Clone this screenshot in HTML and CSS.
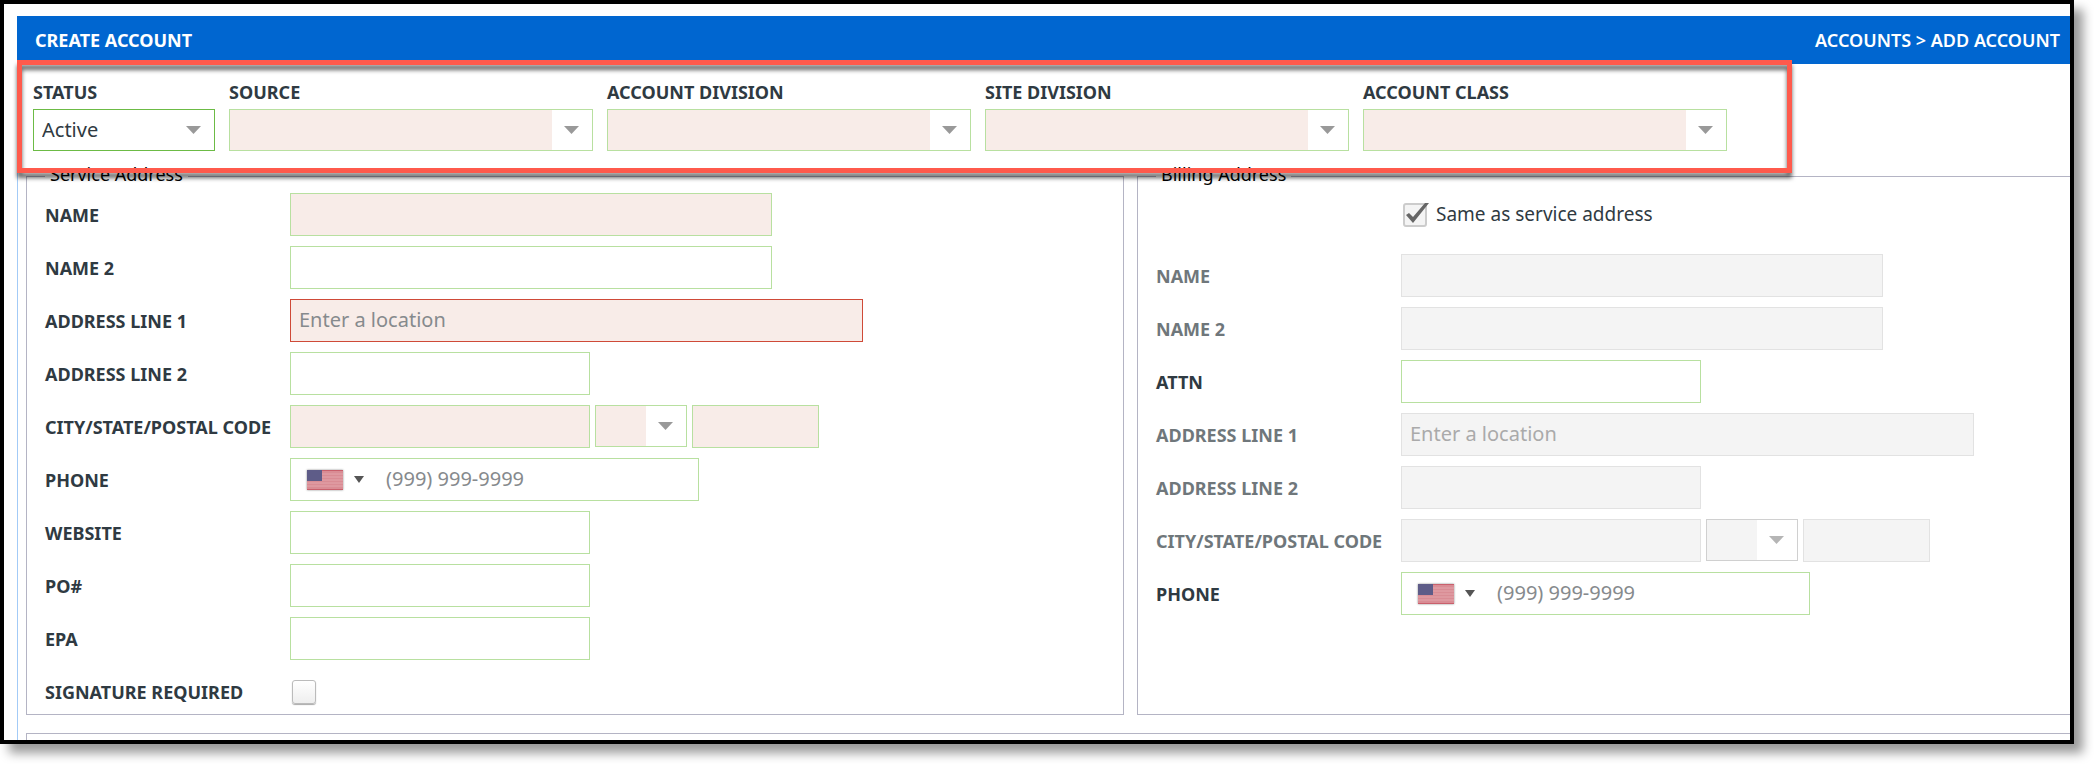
FILE: index.html
```html
<!DOCTYPE html>
<html lang="en">
<head>
  <meta charset="UTF-8" />
  <meta name="viewport" content="width=device-width, initial-scale=1.0"/>
  <title>Create Account</title>
  <link rel="stylesheet" href="styles.css">
</head>
<body>

  <div class="frame">
    <form class="page">

      <header class="page-header">
        <h1>CREATE ACCOUNT</h1>
        <nav><a href="#">ACCOUNTS</a> &gt; <a href="#">ADD ACCOUNT</a></nav>
      </header>

      <!-- Account filters -->
      <div class="filters">
        <div class="filter filter-status">
          <label for="status">STATUS</label>
          <select id="status" class="active"><option>Active</option></select>
        </div>
        <div class="filter">
          <label for="source">SOURCE</label>
          <select id="source" class="required"><option></option></select>
        </div>
        <div class="filter">
          <label for="accountDivision">ACCOUNT DIVISION</label>
          <select id="accountDivision" class="required"><option></option></select>
        </div>
        <div class="filter">
          <label for="siteDivision">SITE DIVISION</label>
          <select id="siteDivision" class="required"><option></option></select>
        </div>
        <div class="filter">
          <label for="accountClass">ACCOUNT CLASS</label>
          <select id="accountClass" class="required"><option></option></select>
        </div>
        <div class="highlight"></div>
      </div>

      <div class="addresses">
        <fieldset>
          <legend>Service Address</legend>
          <div class="rows">
            <div class="row">
              <label for="name">NAME</label>
              <input id="name" type="text" class="wide required">
            </div>
            <div class="row">
              <label for="name2">NAME 2</label>
              <input id="name2" type="text" class="wide">
            </div>
            <div class="row">
              <label for="address1">ADDRESS LINE 1</label>
              <input id="address1" type="text" class="full required invalid" placeholder="Enter a location">
            </div>
            <div class="row">
              <label for="address2">ADDRESS LINE 2</label>
              <input id="address2" type="text">
            </div>
            <div class="row">
              <label for="city">CITY/STATE/POSTAL CODE</label>
              <input id="city" type="text" class="required">
              <select class="state required" aria-label="State"><option></option></select>
              <input type="text" class="postal required" aria-label="Postal code">
            </div>
            <div class="row">
              <label for="phone">PHONE</label>
              <div class="phone">
                <button type="button" class="country" aria-label="Country">
                  <svg class="flag" viewBox="0 0 36 20">
                    <rect width="36" height="20" fill="#d98c94"/>
                    <path d="M0 .5h36M0 19.500h36" stroke="#c9606c" stroke-width="1"/>
                    <path d="M0 4h36M0 7h36M0 10h36M0 13h36M0 16h36" stroke="#e3a5ab" stroke-width="1"/>
                    <rect width="15" height="11" fill="#5e5c88"/>
                  </svg>
                  <svg class="caret" viewBox="0 0 10 7"><path d="M0 0h10L5 7z" fill="#555"/></svg>
                </button>
                <input id="phone" type="tel" placeholder="(999) 999-9999">
              </div>
            </div>
            <div class="row">
              <label for="website">WEBSITE</label>
              <input id="website" type="text">
            </div>
            <div class="row">
              <label for="po">PO#</label>
              <input id="po" type="text">
            </div>
            <div class="row">
              <label for="epa">EPA</label>
              <input id="epa" type="text">
            </div>
            <div class="row">
              <label for="signature">SIGNATURE REQUIRED</label>
              <input id="signature" type="checkbox">
            </div>
          </div>
        </fieldset>

        <fieldset class="billing">
          <legend>Billing Address</legend>
          <div class="rows">
            <div class="row same-row">
              <input id="same" type="checkbox" checked>
              <label for="same">Same as service address</label>
            </div>
            <div class="row disabled">
              <label for="billName">NAME</label>
              <input id="billName" type="text" class="wide" disabled>
            </div>
            <div class="row disabled">
              <label for="billName2">NAME 2</label>
              <input id="billName2" type="text" class="wide" disabled>
            </div>
            <div class="row">
              <label for="attn">ATTN</label>
              <input id="attn" type="text">
            </div>
            <div class="row disabled">
              <label for="billAddress1">ADDRESS LINE 1</label>
              <input id="billAddress1" type="text" class="full" placeholder="Enter a location" disabled>
            </div>
            <div class="row disabled">
              <label for="billAddress2">ADDRESS LINE 2</label>
              <input id="billAddress2" type="text" disabled>
            </div>
            <div class="row disabled">
              <label for="billCity">CITY/STATE/POSTAL CODE</label>
              <input id="billCity" type="text" disabled>
              <select class="state" aria-label="Billing state" disabled><option></option></select>
              <input type="text" class="postal" aria-label="Billing postal code" disabled>
            </div>
            <div class="row">
              <label for="billPhone">PHONE</label>
              <div class="phone">
                <button type="button" class="country" aria-label="Billing country">
                  <svg class="flag" viewBox="0 0 36 20">
                    <rect width="36" height="20" fill="#d98c94"/>
                    <path d="M0 .5h36M0 19.500h36" stroke="#c9606c" stroke-width="1"/>
                    <path d="M0 4h36M0 7h36M0 10h36M0 13h36M0 16h36" stroke="#e3a5ab" stroke-width="1"/>
                    <rect width="15" height="11" fill="#5e5c88"/>
                  </svg>
                  <svg class="caret" viewBox="0 0 10 7"><path d="M0 0h10L5 7z" fill="#555"/></svg>
                </button>
                <input id="billPhone" type="tel" placeholder="(999) 999-9999">
              </div>
            </div>
          </div>
        </fieldset>
      </div>

      <fieldset class="next-section"></fieldset>
    </form>
  </div>

</body>
</html>
```

FILE: styles.css
```css
* {
  box-sizing: border-box;
}

body {
  margin: 0;
  background-color: white;
  font-family: "Noto Sans", "Open Sans", sans-serif;
  font-size: 18px;
  color: #2f3a42;
}

.frame {
  height: calc(100vh - 20px);
  margin: 0 20px 20px 0;
  padding: 12px 0 0 13px;
  border: 4px solid black;
  box-shadow: 9px 9px 10px rgba(0, 0, 0, 0.4);
  overflow: hidden;
}

.page {
  min-height: 100%;
  border-left: 1px solid #a3cbf7;
}

.page-header {
  display: flex;
  justify-content: space-between;
  align-items: center;
  height: 48px;
  margin-left: -1px;
  padding: 0 10px 0 18px;
  background-color: #0066d0;
  color: white;
}

.page-header h1 {
  margin: 0;
  font-size: 18px;
  font-weight: bold;
}

.page-header nav {
  font-weight: 600;
}

.page-header a {
  color: white;
  text-decoration: none;
}

/* Filters */
.filters {
  position: relative;
  display: flex;
  gap: 14px;
  padding: 16px 15px 13px 15px;
}

.filter {
  display: flex;
  flex-direction: column;
  gap: 4px;
  width: 364px;
}

.filter-status {
  width: 182px;
}

.highlight {
  position: absolute;
  top: -4px;
  left: -1px;
  width: 1775px;
  height: 113px;
  border: 5px solid #ff5a4c;
  filter: drop-shadow(0 5px 2px rgba(0, 0, 0, 0.6));
  pointer-events: none;
}

label {
  font-weight: bold;
  line-height: 25px;
}

input,
select {
  height: 43px;
  margin: 0;
  padding: 0 8px 2px 8px;
  border: 1px solid #b8e0a0;
  border-radius: 0;
  background-color: white;
  font-family: inherit;
  font-size: 20px;
  color: #2f3a42;
  outline: none;
}

input {
  width: 300px;
}

input::placeholder {
  color: #868a8d;
  opacity: 1;
}

select {
  appearance: none;
  width: 100%;
  height: 42px;
  background: url("data:image/svg+xml,%3Csvg xmlns='http://www.w3.org/2000/svg' width='15' height='8'%3E%3Cpath d='M0 0h15L7.500 8z' fill='%23999'/%3E%3C/svg%3E") no-repeat right 13px center, white;
}

select.active {
  border-color: #6cbb45;
}

input.required {
  background-color: #f8ece8;
}

select.required {
  background: url("data:image/svg+xml,%3Csvg xmlns='http://www.w3.org/2000/svg' width='15' height='8'%3E%3Cpath d='M0 0h15L7.500 8z' fill='%23999'/%3E%3C/svg%3E") no-repeat right 13px center, linear-gradient(to left, white 40px, #f8ece8 40px);
}

input.invalid {
  border-color: #cf4a38;
}

input:disabled {
  background-color: #f4f4f4;
  border-color: #e2e2e2;
}

input:disabled::placeholder {
  color: #aaa;
}

select:disabled {
  opacity: 1;
  border-color: #d0d0d0;
  background: url("data:image/svg+xml,%3Csvg xmlns='http://www.w3.org/2000/svg' width='15' height='8'%3E%3Cpath d='M0 0h15L7.500 8z' fill='%23b5b5b5'/%3E%3C/svg%3E") no-repeat right 13px center, linear-gradient(to left, white 40px, #f4f4f4 40px);
}

.wide {
  width: 482px;
}

.full {
  width: 573px;
}

.postal {
  width: 127px;
}

.row .state {
  width: 92px;
  align-self: flex-start;
}

/* Address blocks */
.addresses {
  display: grid;
  grid-template-columns: 1098px 1fr;
  gap: 13px;
  margin-left: 8px;
}

fieldset {
  min-width: 0;
  margin: 0;
  padding: 0 0 1px 18px;
  border: 1px solid #b4b4c4;
}

.billing {
  border-right: none;
}

legend {
  padding: 0 5px 4px 5px;
  line-height: 20px;
  color: black;
}

.rows {
  display: flex;
  flex-direction: column;
  gap: 10px;
  padding-top: 5px;
}

.row {
  display: flex;
  align-items: center;
  gap: 5px;
  height: 43px;
}

.row > label {
  width: 240px;
  padding-top: 2px;
  white-space: nowrap;
}

.disabled label {
  color: #6f777b;
}

.same-row {
  margin-bottom: 8px;
  padding-left: 245px;
}

.row.same-row label {
  padding: 0;
  font-weight: normal;
  font-size: 19px;
}

.phone {
  display: flex;
  align-items: center;
  width: 409px;
  height: 43px;
  border: 1px solid #b8e0a0;
}

.phone input {
  flex: 1;
  width: 0;
  height: 41px;
  border: none;
  background: none;
}

.country {
  display: flex;
  align-items: center;
  gap: 11px;
  width: 87px;
  height: 41px;
  padding: 0 0 0 16px;
  border: none;
  background: none;
}

.flag {
  width: 36px;
  height: 20px;
  box-shadow: 0 0 2px #888;
}

.caret {
  width: 10px;
  height: 7px;
}

input[type="checkbox"] {
  appearance: none;
  flex: none;
  width: 24px;
  height: 24px;
  margin: 0 2px;
  padding: 0;
  border: 1px solid #bbb;
  border-radius: 3px;
  background: linear-gradient(white, #eee);
  box-shadow: 0 1px 1px #aaa;
}

/* the tick sticks out of the box on the right */
input[type="checkbox"]:checked {
  width: 28px;
  height: 26px;
  margin-right: 0;
  border: none;
  box-shadow: none;
  background: url("data:image/svg+xml,%3Csvg xmlns='http://www.w3.org/2000/svg' width='28' height='26'%3E%3Crect x='1' y='2' width='22' height='22' rx='2' fill='%23f4f4f4' stroke='%23ccc' stroke-width='2'/%3E%3Cpath d='M3 13l3-2 4 4L22 1h4L10 21z' fill='%23666'/%3E%3C/svg%3E") no-repeat center;
}

.next-section {
  height: 40px;
  margin: 18px 0 0 8px;
  border-right: none;
}
```
